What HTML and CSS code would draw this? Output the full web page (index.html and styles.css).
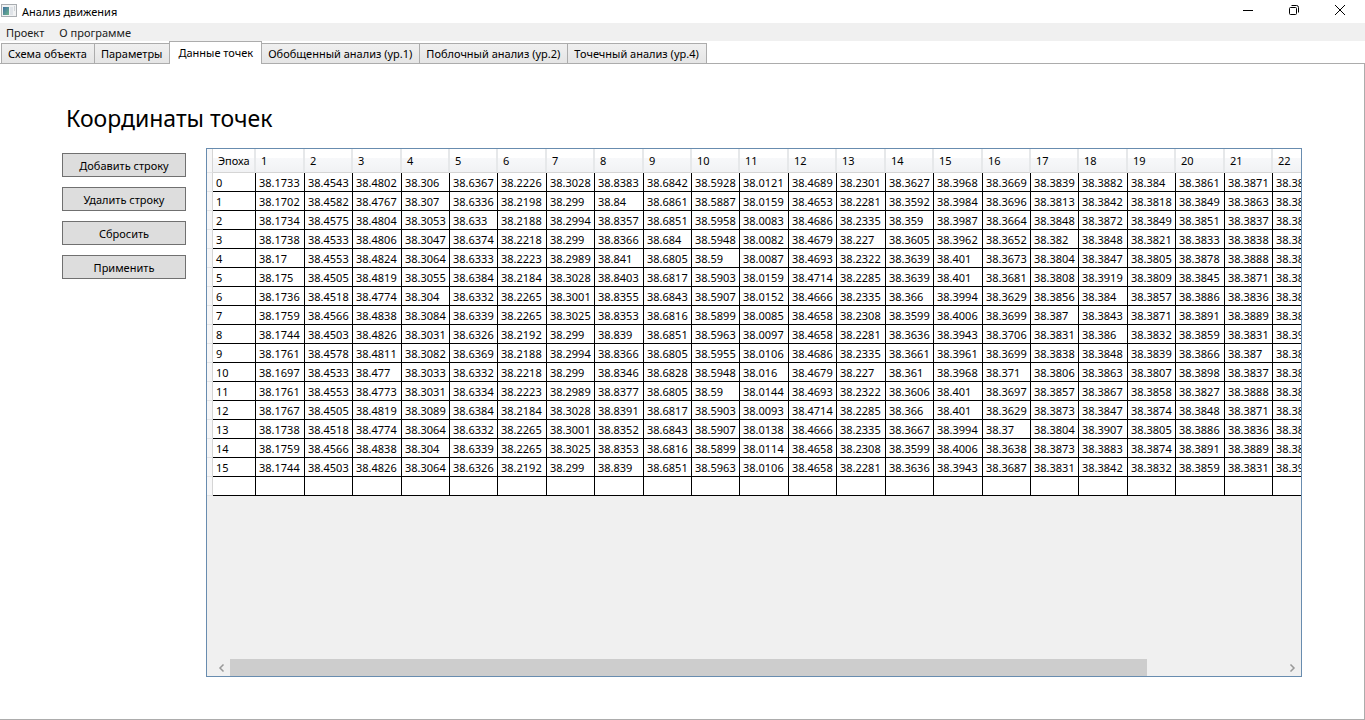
FILE: index.html
```html
<!DOCTYPE html>
<html lang="ru">
<head>
<meta charset="utf-8">
<title>Анализ движения</title>
<link rel="stylesheet" href="styles.css">
</head>
<body>
<div class="window">
  <header class="titlebar">
    <svg class="app-icon" width="16" height="16" viewBox="0 0 16 16" aria-hidden="true">
      <defs><linearGradient id="pane" x1="0" y1="0" x2="1" y2="1"><stop offset="0" stop-color="#3c6ea0"/><stop offset="1" stop-color="#6fb58c"/></linearGradient></defs>
      <rect x="0.5" y="0.5" width="15" height="12" fill="#f1f2f3" stroke="#a9adb1"/>
      <rect x="2" y="3" width="6" height="8" fill="url(#pane)"/>
      <rect x="9" y="3" width="3" height="8" fill="#dfe3e8"/>
      <rect x="13" y="2" width="1" height="5" fill="#cfd3d7"/>
    </svg>
    <span class="app-name">Анализ движения</span>
    <div class="window-controls">
      <button class="win-btn" aria-label="Свернуть"><svg width="12" height="12" viewBox="0 0 12 12"><path d="M1 6.5H11" stroke="#000" fill="none"/></svg></button>
      <button class="win-btn" aria-label="Восстановить"><svg width="12" height="12" viewBox="0 0 12 12"><path d="M2.5 3.5H7.5Q8.500 3.500 8.500 4.500V9.500Q8.500 10.500 7.500 10.500H2.500Q1.500 10.500 1.500 9.500V4.500Q1.500 3.500 2.500 3.500ZM3.500 1.500H8.500Q10.500 1.500 10.500 3.500V8.500" stroke="#000" fill="none"/></svg></button>
      <button class="win-btn" aria-label="Закрыть"><svg width="12" height="12" viewBox="0 0 12 12"><path d="M1 1L11 11M11 1L1 11" stroke="#000" fill="none"/></svg></button>
    </div>
  </header>
  <nav class="menubar">
    <button class="menu-item">Проект</button>
    <button class="menu-item">О программе</button>
  </nav>
  <div class="tabs" role="tablist">
    <button class="tab" role="tab">Схема объекта</button>
    <button class="tab" role="tab">Параметры</button>
    <button class="tab tab-active" role="tab" aria-selected="true">Данные точек</button>
    <button class="tab" role="tab">Обобщенный анализ (ур.1)</button>
    <button class="tab" role="tab">Поблочный анализ (ур.2)</button>
    <button class="tab" role="tab">Точечный анализ (ур.4)</button>
  </div>
  <main class="page">
    <h1 class="page-title">Координаты точек</h1>
    <div class="workspace">
      <div class="actions">
        <button class="action">Добавить строку</button>
        <button class="action">Удалить строку</button>
        <button class="action">Сбросить</button>
        <button class="action">Применить</button>
      </div>
      <div class="grid">
        <div class="grid-view">
          <table class="points">
            <colgroup><col class="col-mark"><col class="col-epoch"></colgroup>
            <colgroup><col class="w"><col class="n"><col class="w"><col class="n"><col class="n"><col class="w"><col class="n"><col class="w"><col class="n"><col class="n"><col class="w"><col class="n"><col class="w"><col class="n"><col class="w"><col class="n"><col class="n"><col class="w"><col class="n"><col class="w"><col class="n"><col class="w"></colgroup>
            <thead>
              <tr><td class="mark"><th>Эпоха<th>1<th>2<th>3<th>4<th>5<th>6<th>7<th>8<th>9<th>10<th>11<th>12<th>13<th>14<th>15<th>16<th>17<th>18<th>19<th>20<th>21<th>22
            </thead>
            <tbody>
              <tr><td class="mark"><td>0<td>38.1733<td>38.4543<td>38.4802<td>38.306<td>38.6367<td>38.2226<td>38.3028<td>38.8383<td>38.6842<td>38.5928<td>38.0121<td>38.4689<td>38.2301<td>38.3627<td>38.3968<td>38.3669<td>38.3839<td>38.3882<td>38.384<td>38.3861<td>38.3871<td>38.38
              <tr><td class="mark"><td>1<td>38.1702<td>38.4582<td>38.4767<td>38.307<td>38.6336<td>38.2198<td>38.299<td>38.84<td>38.6861<td>38.5887<td>38.0159<td>38.4653<td>38.2281<td>38.3592<td>38.3984<td>38.3696<td>38.3813<td>38.3842<td>38.3818<td>38.3849<td>38.3863<td>38.38
              <tr><td class="mark"><td>2<td>38.1734<td>38.4575<td>38.4804<td>38.3053<td>38.633<td>38.2188<td>38.2994<td>38.8357<td>38.6851<td>38.5958<td>38.0083<td>38.4686<td>38.2335<td>38.359<td>38.3987<td>38.3664<td>38.3848<td>38.3872<td>38.3849<td>38.3851<td>38.3837<td>38.38
              <tr><td class="mark"><td>3<td>38.1738<td>38.4533<td>38.4806<td>38.3047<td>38.6374<td>38.2218<td>38.299<td>38.8366<td>38.684<td>38.5948<td>38.0082<td>38.4679<td>38.227<td>38.3605<td>38.3962<td>38.3652<td>38.382<td>38.3848<td>38.3821<td>38.3833<td>38.3838<td>38.38
              <tr><td class="mark"><td>4<td>38.17<td>38.4553<td>38.4824<td>38.3064<td>38.6333<td>38.2223<td>38.2989<td>38.841<td>38.6805<td>38.59<td>38.0087<td>38.4693<td>38.2322<td>38.3639<td>38.401<td>38.3673<td>38.3804<td>38.3847<td>38.3805<td>38.3878<td>38.3888<td>38.38
              <tr><td class="mark"><td>5<td>38.175<td>38.4505<td>38.4819<td>38.3055<td>38.6384<td>38.2184<td>38.3028<td>38.8403<td>38.6817<td>38.5903<td>38.0159<td>38.4714<td>38.2285<td>38.3639<td>38.401<td>38.3681<td>38.3808<td>38.3919<td>38.3809<td>38.3845<td>38.3871<td>38.38
              <tr><td class="mark"><td>6<td>38.1736<td>38.4518<td>38.4774<td>38.304<td>38.6332<td>38.2265<td>38.3001<td>38.8355<td>38.6843<td>38.5907<td>38.0152<td>38.4666<td>38.2335<td>38.366<td>38.3994<td>38.3629<td>38.3856<td>38.384<td>38.3857<td>38.3886<td>38.3836<td>38.38
              <tr><td class="mark"><td>7<td>38.1759<td>38.4566<td>38.4838<td>38.3084<td>38.6339<td>38.2265<td>38.3025<td>38.8353<td>38.6816<td>38.5899<td>38.0085<td>38.4658<td>38.2308<td>38.3599<td>38.4006<td>38.3699<td>38.387<td>38.3843<td>38.3871<td>38.3891<td>38.3889<td>38.38
              <tr><td class="mark"><td>8<td>38.1744<td>38.4503<td>38.4826<td>38.3031<td>38.6326<td>38.2192<td>38.299<td>38.839<td>38.6851<td>38.5963<td>38.0097<td>38.4658<td>38.2281<td>38.3636<td>38.3943<td>38.3706<td>38.3831<td>38.386<td>38.3832<td>38.3859<td>38.3831<td>38.39
              <tr><td class="mark"><td>9<td>38.1761<td>38.4578<td>38.4811<td>38.3082<td>38.6369<td>38.2188<td>38.2994<td>38.8366<td>38.6805<td>38.5955<td>38.0106<td>38.4686<td>38.2335<td>38.3661<td>38.3961<td>38.3699<td>38.3838<td>38.3848<td>38.3839<td>38.3866<td>38.387<td>38.38
              <tr><td class="mark"><td>10<td>38.1697<td>38.4533<td>38.477<td>38.3033<td>38.6332<td>38.2218<td>38.299<td>38.8346<td>38.6828<td>38.5948<td>38.016<td>38.4679<td>38.227<td>38.361<td>38.3968<td>38.371<td>38.3806<td>38.3863<td>38.3807<td>38.3898<td>38.3837<td>38.38
              <tr><td class="mark"><td>11<td>38.1761<td>38.4553<td>38.4773<td>38.3031<td>38.6334<td>38.2223<td>38.2989<td>38.8377<td>38.6805<td>38.59<td>38.0144<td>38.4693<td>38.2322<td>38.3606<td>38.401<td>38.3697<td>38.3857<td>38.3867<td>38.3858<td>38.3827<td>38.3888<td>38.38
              <tr><td class="mark"><td>12<td>38.1767<td>38.4505<td>38.4819<td>38.3089<td>38.6384<td>38.2184<td>38.3028<td>38.8391<td>38.6817<td>38.5903<td>38.0093<td>38.4714<td>38.2285<td>38.366<td>38.401<td>38.3629<td>38.3873<td>38.3847<td>38.3874<td>38.3848<td>38.3871<td>38.38
              <tr><td class="mark"><td>13<td>38.1738<td>38.4518<td>38.4774<td>38.3064<td>38.6332<td>38.2265<td>38.3001<td>38.8352<td>38.6843<td>38.5907<td>38.0138<td>38.4666<td>38.2335<td>38.3667<td>38.3994<td>38.37<td>38.3804<td>38.3907<td>38.3805<td>38.3886<td>38.3836<td>38.38
              <tr><td class="mark"><td>14<td>38.1759<td>38.4566<td>38.4838<td>38.304<td>38.6339<td>38.2265<td>38.3025<td>38.8353<td>38.6816<td>38.5899<td>38.0114<td>38.4658<td>38.2308<td>38.3599<td>38.4006<td>38.3638<td>38.3873<td>38.3883<td>38.3874<td>38.3891<td>38.3889<td>38.38
              <tr><td class="mark"><td>15<td>38.1744<td>38.4503<td>38.4826<td>38.3064<td>38.6326<td>38.2192<td>38.299<td>38.839<td>38.6851<td>38.5963<td>38.0106<td>38.4658<td>38.2281<td>38.3636<td>38.3943<td>38.3687<td>38.3831<td>38.3842<td>38.3832<td>38.3859<td>38.3831<td>38.39
              <tr><td class="mark"><td><td><td><td><td><td><td><td><td><td><td><td><td><td><td><td><td><td><td><td><td><td><td><td>
            </tbody>
          </table>
        </div>
        <div class="scrollbar">
          <button class="scroll-btn" aria-label="Прокрутить влево"><svg width="7" height="8" viewBox="0 0 7 8"><path d="M5.500 0.500L2 4L5.500 7.500" fill="none" stroke="#999" stroke-width="1.500"/></svg></button>
          <div class="track"><div class="thumb"></div></div>
          <button class="scroll-btn" aria-label="Прокрутить вправо"><svg width="7" height="8" viewBox="0 0 7 8"><path d="M1.500 0.500L5 4L1.500 7.500" fill="none" stroke="#999" stroke-width="1.500"/></svg></button>
        </div>
      </div>
    </div>
  </main>
</div>
</body>
</html>
```
FILE: styles.css
```css
* { box-sizing: border-box; }
body {
  margin: 0;
  background: #fff;
  color: #000;
  font: 11px/16px "Noto Sans", "Open Sans", sans-serif;
}
button {
  margin: 0;
  padding: 0;
  border: 0;
  background: none;
  color: inherit;
  font: inherit;
}
.window { display: flex; flex-direction: column; height: 100vh; }

.titlebar { display: flex; align-items: center; height: 23px; padding-left: 1px; }
.app-icon { margin-right: 5px; }
.window-controls { display: flex; align-self: flex-start; margin-left: auto; padding-right: 2px; }
.win-btn { display: flex; align-items: center; justify-content: center; width: 46px; height: 20px; }

.menubar { display: flex; gap: 15px; height: 18px; padding: 1px 0 0 6px; background: #f0f0f0; }
.menu-item { color: #212121; }

.tabs { display: flex; align-items: flex-end; position: relative; z-index: 1; height: 23px; padding-left: 1px; }
.tab {
  height: 21px;
  margin-right: -1px;
  padding: 1px 7px 0 6px;
  border: 1px solid #acacac;
  background: linear-gradient(#f0f0f0, #e5e5e5);
  white-space: nowrap;
}
.tab-active { height: 23px; padding: 0 8px; border-bottom: 0; background: #fff; }

.page {
  flex: 1;
  display: flex;
  flex-direction: column;
  min-height: 0;
  margin-top: -1px;
  padding: 38px 62px 42px;
  border: 1px solid #acacac;
  border-left: 0;
}
.page-title { margin: 0 0 14px; padding-left: 4px; font-size: 23px; line-height: 32px; font-weight: 400; }
.workspace { flex: 1; display: flex; gap: 20px; min-height: 0; }
.actions { display: flex; flex-direction: column; gap: 10px; width: 124px; padding-top: 5px; }
.action { height: 24px; padding-top: 1px; border: 1px solid #707070; background: #ddd; }

.grid { flex: 1; display: flex; flex-direction: column; min-width: 0; border: 1px solid #688caf; background: #f0f0f0; }
.grid-view { flex: 1; min-height: 0; overflow: hidden; }
.points { width: 1115px; table-layout: fixed; border-collapse: separate; border-spacing: 0; background: #fff; }
.col-mark { width: 6px; }
.col-epoch { width: 43px; }
.w { width: 49px; }
.n { width: 48px; }
.points th {
  height: 24px;
  padding: 1px 0 0 5px;
  border-right: 2px solid #e6e8ea;
  border-bottom: 1px solid #d5d5d5;
  background: linear-gradient(#fff 40%, #f7f8fa 40%, #f1f2f4);
  font-weight: 400;
  text-align: left;
}
.points td { height: 19px; padding: 1px 0 0 3px; border-right: 1px solid #000; border-bottom: 1px solid #000; line-height: 16px; }
.points .mark { padding: 0; border-right: 1px solid #d5d5d5; border-bottom: 1px solid #e3e4e6; background: #f7f7f8; }

.scrollbar { display: flex; height: 17px; padding-left: 6px; }
.scroll-btn { display: flex; align-items: center; justify-content: center; width: 17px; }
.track { flex: 1; }
.thumb { width: 87%; height: 100%; background: #cdcdcd; }
```
